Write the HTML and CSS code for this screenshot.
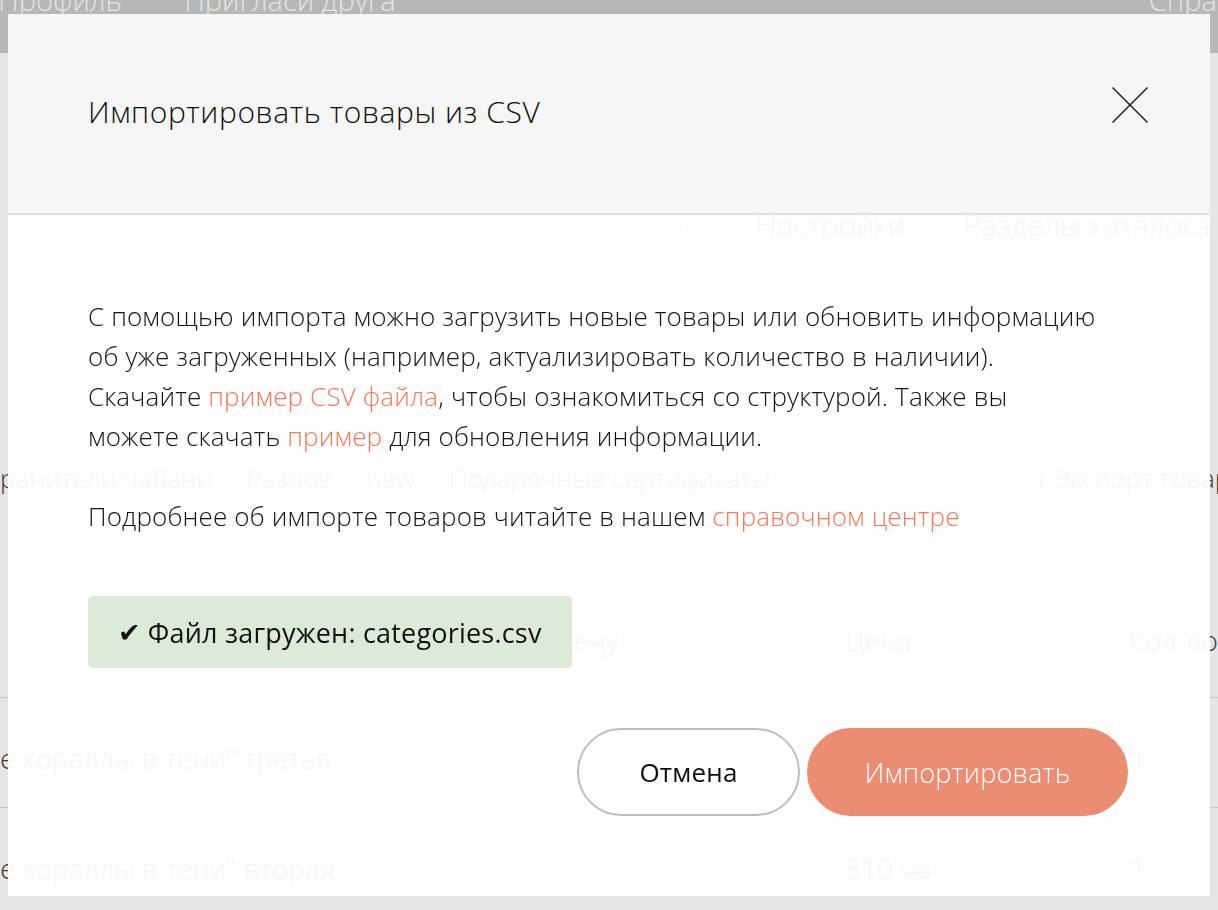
FILE: index.html
```html
<!DOCTYPE html>
<html lang="ru">
<head>
<meta charset="utf-8">
<title>Импорт товаров</title>
<link rel="stylesheet" href="styles.css">
</head>
<body>
<div class="page">
  <header class="topbar">
    <nav class="topnav">
      <span>Профиль</span>
      <span>Пригласи друга</span>
    </nav>
    <span class="topnav-right">Справка</span>
  </header>
  <div class="toolbar">
    <span class="dots">···</span>
    <span>Настройки</span>
    <span>Разделы каталога</span>
  </div>
  <div class="tabs">
    <span>ранители чабани</span>
    <span>Разное</span>
    <span>new</span>
    <span>Подарочные сертификаты</span>
    <span class="tabs-right">↓ Экспорт товаров</span>
  </div>
  <div class="thead">
    <span class="th-name">Изменить цену</span>
    <span class="th-price">Цена</span>
    <span class="th-qty">Кол-во</span>
  </div>
  <div class="trow">
    <span class="td-name">е кораллы в тени" третья</span>
    <span class="td-price"></span>
    <span class="td-qty">1</span>
  </div>
  <div class="trow">
    <span class="td-name">е кораллы в тени" вторая</span>
    <span class="td-price">810 <s>990</s></span>
    <span class="td-qty">1</span>
  </div>
</div>

<div class="overlay">
  <section class="modal" role="dialog" aria-labelledby="modal-title">
    <header class="modal-header">
      <h2 class="modal-title" id="modal-title">Импортировать товары из CSV</h2>
      <button class="modal-close" type="button" aria-label="Закрыть">
        <svg width="36" height="36" viewBox="0 0 36 36" fill="none" stroke="#1a1a1a" stroke-width="1.4">
          <line x1="0.5" y1="0.5" x2="35.5" y2="35.5"/>
          <line x1="35.5" y1="0.5" x2="0.5" y2="35.5"/>
        </svg>
      </button>
    </header>
    <div class="modal-body">
      <div class="modal-text">
        <p>С помощью импорта можно загрузить новые товары или обновить информацию<br>об уже загруженных (например, актуализировать количество в наличии).<br>Скачайте <a href="#">пример CSV файла</a>, чтобы ознакомиться со структурой. Также вы<br>можете скачать <a href="#">пример</a> для обновления информации.</p>
        <p>Подробнее об импорте товаров читайте в нашем <a href="#">справочном центре</a></p>
      </div>
      <div class="upload-status"><span class="check">✔</span><span>Файл загружен: categories.csv</span></div>
      <div class="modal-actions">
        <button class="btn btn-cancel" type="button">Отмена</button>
        <button class="btn btn-primary" type="button">Импортировать</button>
      </div>
    </div>
  </section>
</div>
</body>
</html>
```
FILE: styles.css
```css
html, body {
  margin: 0;
  padding: 0;
  width: 1218px;
  height: 910px;
  overflow: hidden;
  background: #ffffff;
  font-family: "Open Sans", "Noto Sans", sans-serif;
  font-weight: 300;
}

/* ---------- background page (seen through the dialog) ---------- */
.page {
  width: 1218px;
  height: 910px;
  overflow: hidden;
  color: #444444;
  font-size: 28px;
}
.topbar {
  height: 53px;
  background: #cccccc;
  color: #ffffff;
  display: flex;
  justify-content: space-between;
  align-items: flex-start;
  overflow: hidden;
  font-size: 29px;
}
.topnav {
  display: flex;
  gap: 62px;
  margin-left: -2px;
}
.topbar span {
  line-height: 1;
  margin-top: -15px;
  white-space: nowrap;
}
.topnav-right {
  margin-right: -44px;
}
.toolbar {
  margin-top: 152px;
  height: 40px;
  line-height: 40px;
  display: flex;
  gap: 58px;
  padding-left: 676px;
  white-space: nowrap;
  font-size: 30px;
}
.tabs {
  margin-top: 213px;
  height: 40px;
  line-height: 40px;
  display: flex;
  gap: 34px;
  white-space: nowrap;
  font-size: 26px;
}
.tabs-right {
  margin-left: 230px;
}
.thead, .trow {
  display: flex;
  align-items: center;
  border-bottom: 1px solid #dddddd;
  white-space: nowrap;
}
.thead {
  margin-top: 92px;
  height: 108px;
  padding-bottom: 8px;
  box-sizing: border-box;
}
.trow {
  height: 110px;
  padding-top: 10px;
  box-sizing: border-box;
}
.th-name, .td-name { width: 845px; }
.th-name { padding-left: 420px; box-sizing: border-box; }
.th-price, .td-price { width: 285px; }
.td-price s { font-size: 18px; }

/* ---------- modal ---------- */
.overlay {
  position: fixed;
  inset: 0;
  background: rgba(0, 0, 0, 0.1);
  padding: 14px 8px;
  display: flex;
  box-sizing: border-box;
}
.modal {
  flex: 1;
  display: flex;
  flex-direction: column;
  color: #151515;
}
.modal-header {
  height: 201px;
  box-sizing: border-box;
  background: #f6f6f6;
  border-bottom: 2px solid #e3e3e3;
  display: flex;
  align-items: center;
  justify-content: space-between;
  padding: 0 62px 4px 80px;
}
.modal-title {
  margin: 0;
  font-size: 30px;
  font-weight: 300;
  line-height: 40px;
  letter-spacing: 0.6px;
  color: #0d0d0d;
}
.modal-close {
  border: 0;
  background: none;
  padding: 0;
  width: 36px;
  height: 36px;
  margin-bottom: 14px;
  cursor: pointer;
  display: block;
}
.modal-close svg { display: block; }

.modal-body {
  flex: 1;
  background: rgba(255, 255, 255, 0.95);
  padding: 81px 82px 80px 80px;
  display: flex;
  flex-direction: column;
  align-items: flex-start;
}
.modal-text {
  font-size: 26px;
  line-height: 40px;
  letter-spacing: 0.15px;
  white-space: nowrap;
}
.modal-text p {
  margin: 0;
}
.modal-text p + p {
  margin-top: 40px;
}
.modal-text a {
  color: #ee7b5c;
  text-decoration: none;
}
.upload-status {
  margin-top: 60px;
  height: 72px;
  box-sizing: border-box;
  background: #dcebd7;
  border-radius: 5px;
  padding: 0 20px 0 30px;
  display: flex;
  align-items: center;
  gap: 7px;
  font-size: 27px;
  font-weight: 400;
  letter-spacing: 0.2px;
  color: #111111;
  width: 484px;
  white-space: nowrap;
}
.check {
  font-family: "DejaVu Sans", sans-serif;
  font-size: 27px;
  line-height: 1;
  color: #111111;
}
.modal-actions {
  margin-top: 60px;
  align-self: flex-end;
  display: flex;
  gap: 7px;
}
.btn {
  height: 88px;
  border-radius: 44px;
  font-family: inherit;
  font-weight: 300;
  font-size: 27px;
  letter-spacing: 0.2px;
  box-sizing: border-box;
  cursor: pointer;
  padding: 0;
}
.btn-cancel {
  width: 223px;
  background: #ffffff;
  border: 2px solid #bdbdbd;
  color: #0d0d0d;
  font-weight: 400;
  font-size: 26px;
}
.btn-primary {
  width: 321px;
  background: #eb8d72;
  border: 2px solid #eb8d72;
  color: #ffffff;
}
```
